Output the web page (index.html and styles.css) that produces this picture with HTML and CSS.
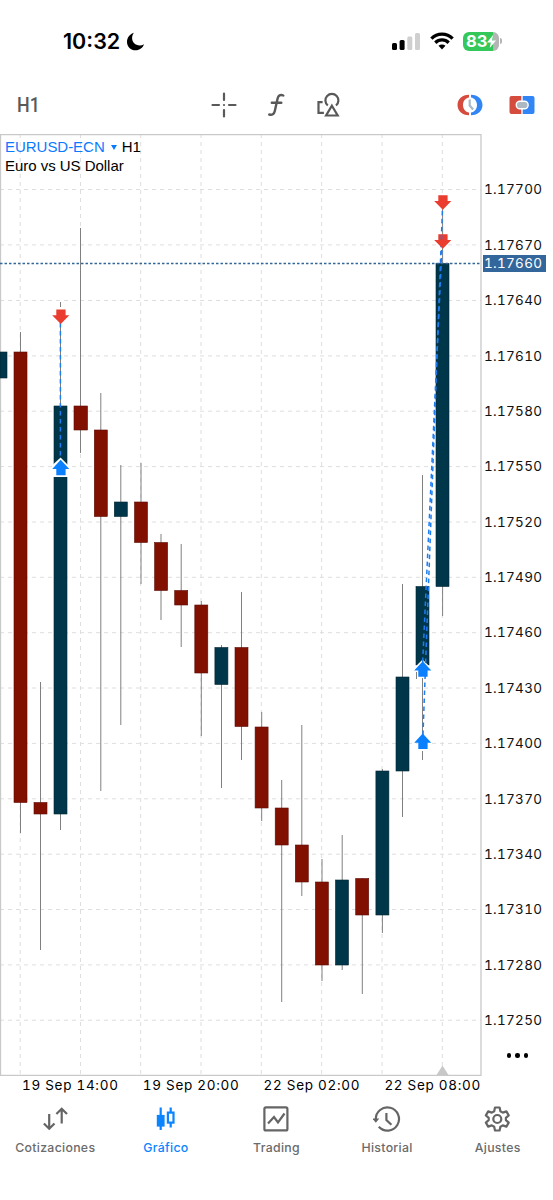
FILE: index.html
```html
<!DOCTYPE html>
<html lang="es">
<head>
  <meta charset="UTF-8">
  <title>EURUSD-ECN H1</title>
  <link rel="stylesheet" href="styles.css">
</head>
<body>
  <div class="status-bar">
    <div class="clock">
      <span>10:32</span>
      <svg width="19" height="19" viewBox="0 0 19 19"><path d="M8 .8C4.200 2 1 5.400 1 10c0 4.700 3.800 8.300 8.600 8.300 4 0 7.300-2.500 8.400-6-1.300.8-2.700 1.200-4.300 1.200-4.400 0-7.600-3.200-7.600-7.400C6.100 4 6.800 2.200 8 .8z"/></svg>
    </div>
    <div class="status-icons">
      <svg class="signal" width="28" height="18" viewBox="0 0 28 18">
        <rect x="0" y="11" width="5" height="7" rx="1.500"/>
        <rect x="7.600" y="8" width="5" height="10" rx="1.500"/>
        <rect x="15.300" y="4.500" width="5" height="13.500" rx="1.500" fill="#cfcfcf"/>
        <rect x="23" y="1" width="5" height="17" rx="1.500" fill="#cfcfcf"/>
      </svg>
      <svg class="wifi" width="24" height="18" viewBox="0 0 24 18" fill="none" stroke="#000" stroke-width="3.300">
        <path d="M1.400 6.700C7.300.7 16.700.7 22.600 6.700"/>
        <path d="M5.300 10.700c3.800-3.700 9.600-3.700 13.400 0"/>
        <path d="M12 17.500l-3.500-3.700c2-1.700 5-1.700 7 0z" fill="#000" stroke="none"/>
      </svg>
      <div class="battery">
        <div class="battery-body"><span>83</span>
          <svg width="9" height="13" viewBox="0 0 9 13"><path d="M6 0L0 7.400h3.800L2.700 13 9 5.400H5.200z" fill="#fff"/></svg>
        </div>
        <div class="battery-cap"></div>
      </div>
    </div>
  </div>

  <div class="toolbar">
    <span class="timeframe">H1</span>
    <div class="tools">
      <svg width="26" height="26" viewBox="0 0 26 26" stroke="#595959" stroke-width="2.200" stroke-linecap="round">
        <path d="M13 1.500v6.500M13 18v6.500M1.500 13H8M18 13h6.500M13 13h.01"/>
      </svg>
      <svg width="18" height="26" viewBox="0 0 18 26" fill="none" stroke="#595959" stroke-width="2.400" stroke-linecap="round">
        <path d="M15.300 3.500c-3-1.300-5 0-5.700 3L6.800 19c-.7 3.300-2.700 4.300-5.500 3.500M3.800 10.700h9.500"/>
      </svg>
      <svg width="24" height="26" viewBox="0 0 24 26" fill="none" stroke="#595959" stroke-width="2.200">
        <path d="M5.600 10.100H1.500v10.700h5.400"/>
        <path d="M10.800 13.500a6.500 6.500 0 1 1 8.200 0"/>
        <path d="M14.900 13.700L20.700 23.500H9.100z"/>
      </svg>
    </div>
    <div class="trade-tools">
      <svg width="26" height="22" viewBox="0 0 26 22">
        <path d="M12 .8C5 .8.500 5.300.500 11S5 21.200 12 21.200v-2.600C8.500 18 6 15 6 11s2.500-7 6-7.600z" fill="#d54c3f"/>
        <path d="M14 .8c7 0 11.500 4.500 11.500 10.200S21 21.200 14 21.200v-2.600c3.500-.6 6-3.600 6-7.600s-2.500-7-6-7.600z" fill="#3285f4"/>
        <path d="M12.700 5.500v6l3.500 4" fill="none" stroke="#a9b8c5" stroke-width="2.200"/>
      </svg>
      <svg width="26" height="20" viewBox="0 0 26 20">
        <path d="M12.300 1H2.500Q.5 1 .5 3v14q0 2 2 2h9.800z" fill="#d54c3f"/>
        <path d="M13.700 1h9.800q2 0 2 2v14q0 2-2 2h-9.800z" fill="#3285f4"/>
        <rect x="7.300" y="6.300" width="11.800" height="7.400" rx="3.500" fill="#adb8c3" stroke="#fff" stroke-width="1.400"/>
      </svg>
    </div>
  </div>

  <div class="chart-area">
    <div class="chart">
      <svg class="plot" width="482" height="942" viewBox="0 134 482 942">
        <!-- grid -->
        <path class="grid" d="M0 189.500H481M0 244.900H481M0 300.500H481M0 355.900H481M0 411.200H481M0 466.600H481M0 522H481M0 577.300H481M0 632.700H481M0 688H481M0 743.400H481M0 798.800H481M0 854.200H481M0 909.500H481M0 964.900H481M0 1020.200H481"/>
        <path class="grid" d="M20.200 134V1076M80.500 134V1076M140.700 134V1076M201 134V1076M261.300 134V1076M321.600 134V1076M382 134V1076M442.300 134V1076"/>
        <path class="frame" d="M.5 134V1076M0 134.500H481V1075.500H0"/>
        <path d="M436.500 1075L442.500 1065.500 448.500 1075z" fill="#c8c8c8"/>
        <!-- wicks -->
        <path class="wick" d="M20.500 332V833M40.500 682V950M60.500 302V830M80.500 228V453M100.800 393V791M120.800 465V725M141 463V584M161 534V620M181.200 544V647M201.300 601V736M221.500 645V788M241.500 592V760M261.700 712V821M281.700 780V1002M301.800 725V896M322 859V981M342.200 835V970M362.300 878V994M382.400 769V933M402.500 584V817M422.500 475V760M442.600 205V616M416.500 672V679"/>
        <!-- bodies -->
        <g class="down">
          <rect x="14" y="352" width="13" height="450.500"/>
          <rect x="34" y="802.500" width="13" height="11.500"/>
          <rect x="74" y="406" width="13.500" height="24"/>
          <rect x="94.300" y="430" width="13" height="86.500"/>
          <rect x="134.500" y="502" width="13" height="40.500"/>
          <rect x="154.600" y="542.500" width="13" height="48"/>
          <rect x="174.700" y="590.500" width="13" height="14.500"/>
          <rect x="194.800" y="605" width="13" height="68"/>
          <rect x="235" y="647.500" width="13" height="79"/>
          <rect x="255.100" y="727" width="13" height="81"/>
          <rect x="275.200" y="808" width="13" height="37"/>
          <rect x="295.300" y="845" width="13" height="37"/>
          <rect x="315.400" y="882" width="13" height="83"/>
          <rect x="355.700" y="878.500" width="13" height="36.500"/>
        </g>
        <g class="up">
          <rect x="0" y="352" width="7" height="26"/>
          <rect x="54" y="406" width="13" height="408"/>
          <rect x="114.300" y="502" width="13" height="14.500"/>
          <rect x="214.900" y="647.500" width="13" height="37"/>
          <rect x="335.500" y="880" width="13" height="85"/>
          <rect x="375.900" y="771" width="13" height="144"/>
          <rect x="396" y="677" width="13" height="94"/>
          <rect x="416" y="586.500" width="13" height="78.500"/>
          <rect x="436" y="263.500" width="13" height="323"/>
        </g>
        <path class="bid" d="M0 263.500H481"/>
        <!-- deals -->
        <g class="halo">
          <path d="M60.600 457.500L69.500 466.500V477H53V464.500z"/>
          <path d="M422.600 659.500L431.500 668.500V678H417.500V668.500H413.500z"/>
          <path d="M417.500 742h10V751h-10z"/>
          <path d="M56.500 307h8v16h-8zM438.500 193h8v15h-8z"/>
        </g>
        <path class="deal" d="M60.400 323V458"/>
        <path class="deal" d="M422.300 670L442.200 242"/>
        <path class="deal" d="M422.700 742L442.700 202" stroke-dashoffset="1"/>
        <g fill="#ea3d2f">
          <path id="sell" d="M56.300 309.500h9.300v5.800h3.700L60.800 324 52.200 315.300h4.100z"/>
          <use href="#sell" x="382" y="-114.300"/>
          <use href="#sell" x="382" y="-75.300"/>
        </g>
        <g fill="#0a80ff">
          <path id="buy" d="M60.700 459.800L69.300 469h-3.700v6.300h-9.300V469h-4.100z"/>
          <use href="#buy" x="362" y="201.500"/>
          <use href="#buy" x="362" y="273.800"/>
        </g>
        <path class="deal" d="M441.500 235V242"/>
      </svg>
      <div class="symbol">
        <div><span class="symbol-name">EURUSD-ECN</span><span class="caret"></span>H1</div>
        <div>Euro vs US Dollar</div>
      </div>
    </div>
    <div class="prices">
      <span>1.17700</span>
      <span>1.17670</span>
      <span>1.17640</span>
      <span>1.17610</span>
      <span>1.17580</span>
      <span>1.17550</span>
      <span>1.17520</span>
      <span>1.17490</span>
      <span>1.17460</span>
      <span>1.17430</span>
      <span>1.17400</span>
      <span>1.17370</span>
      <span>1.17340</span>
      <span>1.17310</span>
      <span>1.17280</span>
      <span>1.17250</span>
      <div class="current-price">1.17660</div>
      <div class="more"><i></i><i></i><i></i></div>
    </div>
  </div>

  <div class="times">
    <span>19 Sep 14:00</span>
    <span>19 Sep 20:00</span>
    <span>22 Sep 02:00</span>
    <span>22 Sep 08:00</span>
  </div>

  <div class="tab-bar">
    <div class="tab">
      <svg width="28" height="28" viewBox="0 0 28 28">
        <path d="M8.200 9v14.500M2.900 18.500l5.300 5.300 5.300-5.300M20.700 18.500V4M15.400 9L20.700 3.700 26 9"/>
      </svg>
      <span>Cotizaciones</span>
    </div>
    <div class="tab active">
      <svg width="28" height="28" viewBox="0 0 28 28">
        <path d="M8.700 2.500v22.500M18.700 2.500v4.500M18.700 17.500v5"/>
        <rect x="5.900" y="11" width="5.600" height="9.500" fill="#0a84ff"/>
        <rect x="15.900" y="7.600" width="5.600" height="10"/>
      </svg>
      <span>Gráfico</span>
    </div>
    <div class="tab">
      <svg width="28" height="28" viewBox="0 0 28 28">
        <rect x="2.400" y="2.400" width="23" height="23" rx="1.500"/>
        <path d="M6 18.500l6-6.500 4 5.500 6.500-9"/>
      </svg>
      <span>Trading</span>
    </div>
    <div class="tab">
      <svg width="28" height="28" viewBox="0 0 28 28">
        <path d="M2.800 14.500A11.600 11.600 0 1 1 5.800 21.800M13.400 8v7l5 4.800"/>
        <path d="M-.7 13.500h7l-3.500 4.200z" fill="#656565" stroke="none"/>
      </svg>
      <span>Historial</span>
    </div>
    <div class="tab">
      <svg width="28" height="28" viewBox="0 0 28 28">
        <path d="M11 2.500h4.600l.8 3.700 2.400 1.400 3.600-1.200 2.300 4-2.800 2.500v2.200l2.800 2.500-2.300 4-3.600-1.200-2.400 1.400-.8 3.700H11l-.8-3.700-2.400-1.400-3.600 1.200-2.300-4 2.800-2.500v-2.200l-2.800-2.500 2.300-4 3.600 1.200 2.400-1.400z" stroke-linejoin="round"/>
        <circle cx="13.300" cy="14" r="4"/>
      </svg>
      <span>Ajustes</span>
    </div>
  </div>
</body>
</html>
```
FILE: styles.css
```css
body {
  margin: 0;
  width: 553px;
  height: 1200px;
  background: #fff;
  font-family: Inter, "Liberation Sans", sans-serif;
  color: #000;
  overflow: hidden;
}

svg {
  display: block;
  flex: none;
}

.status-bar {
  height: 76px;
  padding: 6px 51px 0 63px;
  box-sizing: border-box;
  display: flex;
  justify-content: space-between;
  align-items: center;
}

.clock {
  display: flex;
  align-items: center;
  gap: 6px;
  font-size: 21.5px;
  font-weight: 600;
}

.status-icons {
  display: flex;
  align-items: center;
  gap: 9px;
}

.signal {
  margin-right: 1px;
}

.battery {
  display: flex;
  align-items: center;
  gap: 1px;
}

.battery-body {
  width: 36px;
  height: 19px;
  padding-left: 3px;
  box-sizing: border-box;
  border-radius: 6px;
  background: linear-gradient(to right, #34c759 30px, #b5b5b5 30px);
  color: #fff;
  font-size: 16.5px;
  font-weight: 700;
  display: flex;
  align-items: center;
}

.battery-cap {
  width: 2px;
  height: 6px;
  border-radius: 0 2px 2px 0;
  background: #b5b5b5;
}

.toolbar {
  height: 58px;
  padding: 0 18.5px 0 17px;
  display: grid;
  grid-template-columns: 194px 1fr auto;
  align-items: center;
}

.timeframe {
  font-family: Roboto, sans-serif;
  font-size: 21px;
  font-weight: 500;
  color: #595959;
  transform: scaleX(0.85);
  transform-origin: left;
}

.tools {
  display: flex;
  gap: 31px;
}

.trade-tools {
  display: flex;
  align-items: center;
  gap: 26px;
}

.chart-area {
  display: flex;
  height: 942px;
}

.chart {
  position: relative;
  width: 482px;
}

.symbol {
  position: absolute;
  left: 5px;
  top: 4px;
  font-family: "Liberation Sans", Arial, sans-serif;
  font-size: 15px;
  line-height: 18.5px;
  letter-spacing: -0.03px;
}

.symbol-name {
  color: #0a7aff;
}

.caret {
  display: inline-block;
  margin: 0 5px 2px 6px;
  border-left: 3px solid transparent;
  border-right: 3px solid transparent;
  border-top: 5px solid #0a7aff;
}

.grid {
  stroke: #dedede;
  stroke-width: 1;
  stroke-dasharray: 4 4;
  fill: none;
}

.frame {
  stroke: #c9c9c9;
  stroke-width: 1.3;
  fill: none;
}

.wick {
  stroke: #808080;
  stroke-width: 1;
}

.down rect {
  fill: #821000;
  stroke: #5c0d04;
  stroke-width: 0.6;
}

.up rect {
  fill: #003649;
  stroke: #032631;
  stroke-width: 0.6;
}

.bid {
  stroke: #336699;
  stroke-width: 1.3;
  stroke-dasharray: 2.5 2;
}

.halo {
  fill: #fff;
}

.deal {
  stroke: #1d7df0;
  stroke-width: 1.5;
  stroke-dasharray: 4.5 3.5;
  fill: none;
}

.prices {
  position: relative;
  width: 71px;
  padding-top: 27.8px;
  box-sizing: border-box;
  font-size: 13.5px;
  font-variant-numeric: tabular-nums;
  letter-spacing: 0.3px;
  color: #111;
}

.prices > span {
  display: flex;
  align-items: center;
  height: 55.38px;
  padding-left: 2px;
}

.current-price {
  position: absolute;
  left: 0.5px;
  top: 121px;
  width: 63px;
  height: 17px;
  line-height: 17px;
  padding-left: 1.5px;
  box-sizing: border-box;
  background: #33669a;
  color: #fff;
}

.more {
  position: absolute;
  left: 24.5px;
  top: 919px;
  display: flex;
  gap: 4.2px;
}

.more i {
  width: 4.5px;
  height: 4.5px;
  border-radius: 50%;
  background: #000;
}

.times {
  display: grid;
  grid-template-columns: repeat(4, 120.8px);
  height: 20px;
  line-height: 19px;
  padding-left: 22px;
  font-size: 13.5px;
  font-variant-numeric: tabular-nums;
  letter-spacing: 0.7px;
  white-space: nowrap;
}

.tab-bar {
  display: grid;
  grid-template-columns: repeat(5, 1fr);
  padding-top: 9px;
}

.tab {
  display: flex;
  flex-direction: column;
  align-items: center;
  gap: 7px;
  font-size: 12.3px;
  font-weight: 500;
  line-height: 16px;
  letter-spacing: 0.3px;
  color: #6b6b6b;
}

.tab svg {
  fill: none;
  stroke: #656565;
  stroke-width: 2.2;
}

.tab.active {
  color: #0a84ff;
}

.tab.active svg {
  stroke: #0a84ff;
}
```
